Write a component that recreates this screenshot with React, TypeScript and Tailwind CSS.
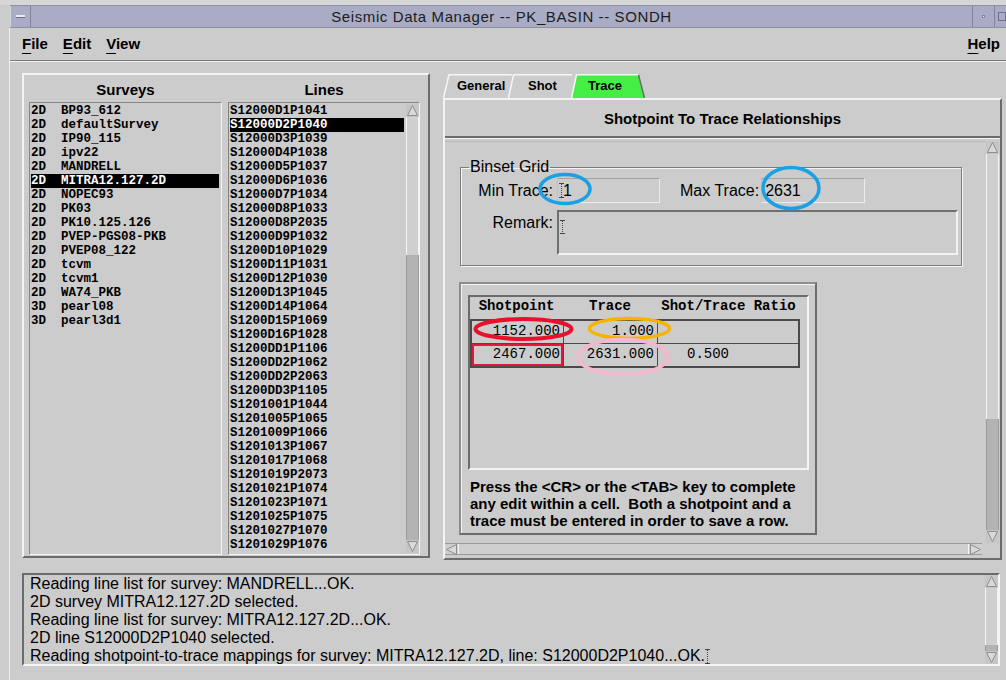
import React from "react";

const SURVEYS: [string, string][] = [
  ["2D", "BP93_612"],
  ["2D", "defaultSurvey"],
  ["2D", "IP90_115"],
  ["2D", "ipv22"],
  ["2D", "MANDRELL"],
  ["2D", "MITRA12.127.2D"],
  ["2D", "NOPEC93"],
  ["2D", "PK03"],
  ["2D", "PK10.125.126"],
  ["2D", "PVEP-PGS08-PKB"],
  ["2D", "PVEP08_122"],
  ["2D", "tcvm"],
  ["2D", "tcvm1"],
  ["2D", "WA74_PKB"],
  ["3D", "pearl08"],
  ["3D", "pearl3d1"],
];

const LINES = [
  "S12000D1P1041", "S12000D2P1040", "S12000D3P1039", "S12000D4P1038",
  "S12000D5P1037", "S12000D6P1036", "S12000D7P1034", "S12000D8P1033",
  "S12000D8P2035", "S12000D9P1032", "S1200D10P1029", "S1200D11P1031",
  "S1200D12P1030", "S1200D13P1045", "S1200D14P1064", "S1200D15P1069",
  "S1200D16P1028", "S1200DD1P1106", "S1200DD2P1062", "S1200DD2P2063",
  "S1200DD3P1105", "S1201001P1044", "S1201005P1065", "S1201009P1066",
  "S1201013P1067", "S1201017P1068", "S1201019P2073", "S1201021P1074",
  "S1201023P1071", "S1201025P1075", "S1201027P1070", "S1201029P1076",
];

const MESSAGES = [
  "Reading line list for survey: MANDRELL...OK.",
  "2D survey MITRA12.127.2D selected.",
  "Reading line list for survey: MITRA12.127.2D...OK.",
  "2D line S12000D2P1040 selected.",
  "Reading shotpoint-to-trace mappings for survey: MITRA12.127.2D, line: S12000D2P1040...OK.",
];

const mono = "font-['Liberation_Mono','DejaVu_Sans_Mono',monospace]";

// motif style arrow button for the scrollbars
const Arrow = ({ dir }: { dir: "up" | "down" | "left" | "right" }) => {
  const pts = {
    up: "6.5,1.5 11.5,11.5 1.5,11.5",
    down: "1.5,1.5 11.5,1.5 6.5,11.5",
    left: "1.5,6.5 11.5,1.5 11.5,11.5",
    right: "1.5,1.5 11.5,6.5 1.5,11.5",
  }[dir];
  return (
    <svg width="13" height="13" viewBox="0 0 13 13" className="block shrink-0">
      <polygon points={pts} fill="#d9d9d9" stroke="#8e8e8e" strokeWidth="1" />
    </svg>
  );
};

const VScroll = ({ light, className = "" }: { light: string; className?: string }) => (
  <div className={`flex w-[13px] shrink-0 flex-col bg-[#c6c6c6] ${className}`}>
    <Arrow dir="up" />
    <div className={`${light} border-x border-[#f4f4f4] bg-[#cfcfcf]`} />
    <div className="flex-1 border-x border-[#9c9c9c] bg-[#b3b3b3]" />
    <Arrow dir="down" />
  </div>
);

// text insertion cursor
const Caret = ({ h = 15 }: { h?: number }) => (
  <svg width="5" height={h} viewBox={`0 0 5 ${h}`} className="inline-block shrink-0 align-middle">
    <path d={`M0 0.5H5M0 ${h - 0.5}H5`} stroke="#444" strokeWidth="1" />
    <path d={`M2.5 1V${h - 1}`} stroke="#444" strokeWidth="1" strokeDasharray="1 1" />
  </svg>
);

const Tab = ({
  width,
  points,
  fill,
  label,
  pad,
  last,
  className = "",
}: {
  width: string;
  points: string;
  fill: string;
  label: string;
  pad: string;
  last?: boolean;
  className?: string;
}) => (
  <div className={`relative h-[24px] ${width} ${className}`}>
    <svg className="absolute inset-0" width="100%" height="24">
      <polygon points={points} fill={fill} />
      <polyline
        points={points.split(" ").slice(0, 3).join(" ")}
        fill="none"
        stroke="#f6f6f6"
        strokeWidth="1.5"
      />
      {last && (
        <polyline
          points={points.split(" ").slice(2).join(" ")}
          fill="none"
          stroke="#6a6a6a"
          strokeWidth="1.5"
        />
      )}
    </svg>
    <span className={`relative block text-[13px] font-bold leading-[24px] ${pad}`}>{label}</span>
  </div>
);

function TitleBar() {
  return (
    <>
      <div className="h-[5px] bg-[#d6d6d6]" />
      <div className="ml-[10px] flex h-[23px] border-y border-[#8c8fa6] bg-[#a9acc4]">
        <div className="flex w-[21px] items-center justify-center border-r border-[#80839a] border-l border-l-[#d0d2e0]">
          <span className="h-[3px] w-[9px] border-b border-[#6e7088] bg-[#e9eaf2]" />
        </div>
        <div className="flex-1 text-center text-[15px] leading-[21px] tracking-[0.6px] text-[#1c1c1c]">
          Seismic Data Manager -- PK_BASIN -- SONDH
        </div>
        <div className="flex w-[22px] items-center justify-center border-l border-[#80839a]">
          <span className="h-[3px] w-[3px] border border-[#80839a] bg-[#e8e8ee]" />
        </div>
        <div className="flex w-[12px] items-center border-l border-[#80839a] pl-[3px]">
          <span className="h-[9px] w-[9px] border border-[#6e7088]" />
        </div>
      </div>
    </>
  );
}

function MenuBar() {
  const item = (first: string, rest: string) => (
    <span className="text-[15px] font-bold">
      <span className="underline underline-offset-[4px]">{first}</span>
      {rest}
    </span>
  );
  return (
    <>
      <div className="flex h-[33px] items-center justify-between border-b border-[#777] pl-[12px] pr-[6px]">
        <div className="flex gap-[15px]">
          {item("F", "ile")}
          {item("E", "dit")}
          {item("V", "iew")}
        </div>
        {item("H", "elp")}
      </div>
      <div className="h-px bg-[#f2f2f2]" />
    </>
  );
}

function SurveyPanel() {
  return (
    <div className="ml-[12px] h-[485px] w-[408px] shrink-0 border-2 border-t-[#f4f4f4] border-l-[#f4f4f4] border-b-[#6b6b6b] border-r-[#6b6b6b]">
      <div className="flex h-[27px] pl-[5px] pt-[3px] text-[15px] font-bold leading-[24px]">
        <div className="w-[193px] text-center">Surveys</div>
        <div className="ml-[6px] w-[192px] text-center">Lines</div>
      </div>
      <div className={`flex gap-[6px] pl-[5px] text-[12.5px] font-bold leading-[14px] ${mono}`}>
        <div className="h-[453px] w-[193px] border border-t-[#858585] border-l-[#858585] border-b-[#f5f5f5] border-r-[#f5f5f5] pt-px">
          {SURVEYS.map(([dim, name]) => {
            const sel = name === "MITRA12.127.2D";
            return (
              <div
                key={name}
                className={`ml-px mr-[2px] h-[14px] whitespace-pre ${sel ? "bg-black text-white" : ""}`}
              >
                {`${dim}  ${name}`}
              </div>
            );
          })}
        </div>
        <div className="flex h-[453px] w-[192px] border border-t-[#858585] border-l-[#858585] border-b-[#f5f5f5] border-r-[#f5f5f5]">
          <div className="flex-1 pt-px">
            {LINES.map((l) => {
              const sel = l === "S12000D2P1040";
              return (
                <div key={l} className={`ml-px mr-[2px] h-[14px] ${sel ? "bg-black text-white" : ""}`}>
                  {l}
                </div>
              );
            })}
          </div>
          <VScroll light="h-[138px]" className="my-px" />
        </div>
      </div>
    </div>
  );
}

function BinsetGrid() {
  const field =
    "h-[25px] border border-t-[#a2a2a2] border-l-[#c2c2c2] border-b-[#ececec] border-r-[#ececec] flex items-center pl-px";
  return (
    <fieldset className="ml-[15px] mt-[15px] w-[502px] border border-[#7c7c7c] pb-[10px] shadow-[inset_1px_1px_0_#f4f4f4,1px_1px_0_#f4f4f4]">
      <legend className="ml-[8px] px-px text-[16px] leading-[18px]">Binset Grid</legend>
      <div className="mt-[2px] flex items-center text-[16px]">
        <span className="w-[92px] text-right">Min Trace:</span>
        <div className={`ml-[4px] w-[103px] ${field}`}>
          <Caret />
          <span className="-ml-[1px]">1</span>
        </div>
        <span className="ml-[20px]">Max Trace:</span>
        <div className={`ml-[2px] w-[104px] ${field}`}>
          <span className="pl-[2px]">2631</span>
        </div>
      </div>
      <div className="mt-[7px] flex items-start text-[16px]">
        <span className="mt-[4px] w-[92px] text-right leading-[18px]">Remark:</span>
        <div className="ml-[4px] h-[45px] w-[401px] border-2 border-t-[#6f6f6f] border-l-[#6f6f6f] border-b-[#f2f2f2] border-r-[#f2f2f2] pl-[1px] pt-[2px]">
          <Caret h={14} />
        </div>
      </div>
    </fieldset>
  );
}

function TraceTable() {
  const cell = "h-[22px] leading-[21px] border-[#4a4a4a]";
  return (
    <div className="ml-[14px] mt-[16px] h-[253px] w-[358px] border-2 border-t-[#8c8c8c] border-l-[#8c8c8c] border-b-[#6b6b6b] border-r-[#6b6b6b] pl-[7px] pt-[11px] shadow-[inset_1px_1px_0_#f4f4f4]">
      <div className="h-[175px] w-[341px] border-2 border-t-[#6b6b6b] border-l-[#6b6b6b] border-b-[#f4f4f4] border-r-[#f4f4f4]">
        <div className={`grid h-[18px] grid-cols-[93px_94px_143px] text-center text-[14px] font-bold leading-[19px] ${mono}`}>
          <span>Shotpoint</span>
          <span>Trace</span>
          <span>Shot/Trace Ratio</span>
        </div>
        <div className={`mt-[4px] w-[330px] border-2 border-[#4a4a4a] text-[14px] ${mono}`}>
          <div className="grid grid-cols-[91px_94px_141px]">
            <span className={`${cell} pr-[3px] text-right`}>1152.000</span>
            <span className={`${cell} border-l pr-[3px] text-right`}>1.000</span>
            <span className={`${cell} border-l`} />
          </div>
          <div className="grid grid-cols-[91px_94px_141px] border-t border-[#4a4a4a]">
            <span className={`${cell} pr-[3px] text-right shadow-[inset_0_0_0_2px_#e3173e]`}>2467.000</span>
            <span className={`${cell} border-l pr-[3px] text-right`}>2631.000</span>
            <span className={`${cell} border-l pl-[29px]`}>0.500</span>
          </div>
        </div>
      </div>
      <p className="mt-[8px] pl-[2px] text-[15px] font-bold leading-[17px]">
        Press the &lt;CR&gt; or the &lt;TAB&gt; key to complete
        <br />
        any edit within a cell.&nbsp; Both a shotpoint and a
        <br />
        trace must be entered in order to save a row.
      </p>
    </div>
  );
}

function TracePanel() {
  return (
    <div className="ml-[13px] mt-px w-[559px] shrink-0">
      <div className="flex h-[24px]">
        <Tab width="w-[69px]" points="0.5,24 6,0.75 69,0.75 69,24" fill="#cccccc" label="General" pad="pl-[14px]" />
        <Tab
          width="w-[64px]"
          className="-ml-[4px]"
          points="0.5,24 5.5,0.75 64,0.75 64,24"
          fill="#cccccc"
          label="Shot"
          pad="pl-[20px]"
        />
        <Tab
          width="w-[74px]"
          className="-ml-[1px]"
          points="0.5,24 5.5,0.75 67.5,0.75 73.5,24"
          fill="#44ee44"
          label="Trace"
          pad="pl-[17px]"
          last
        />
      </div>
      <div className="h-[462px] border-2 border-t-[#f4f4f4] border-l-[#f4f4f4] border-b-[#6b6b6b] border-r-[#6b6b6b]">
        <div className="h-[38px] border-b-2 border-[#6b6b6b] text-center text-[15px] font-bold leading-[37px]">
          Shotpoint To Trace Relationships
        </div>
        <div className="h-px bg-[#f4f4f4]" />
        <div className="flex h-[419px] pt-[2px]">
          <div className="flex w-[540px] flex-col">
            <div className="h-[402px] overflow-hidden border-t border-[#b9b9b9] pt-px">
              <BinsetGrid />
              <TraceTable />
            </div>
            <div className="flex h-[12px] w-[537px] items-center border-y border-[#9c9c9c] bg-[#cfcfcf]">
              <Arrow dir="left" />
              <div className="h-full flex-1 border-x border-[#f4f4f4]" />
              <Arrow dir="right" />
            </div>
          </div>
          <VScroll light="h-[265px]" className="ml-px h-[402px]" />
        </div>
      </div>
    </div>
  );
}

function MessageLog() {
  return (
    <div className="ml-[12px] mt-[13px] flex h-[93px] w-[978px] border-2 border-t-[#6b6b6b] border-l-[#6b6b6b] border-b-[#f4f4f4] border-r-[#f4f4f4]">
      <div className="flex-1 pl-[6px] text-[16px] leading-[18px]">
        {MESSAGES.map((m, i) => (
          <div key={i} className="flex items-center whitespace-pre">
            {m}
            {i === MESSAGES.length - 1 && <Caret h={15} />}
          </div>
        ))}
      </div>
      <VScroll light="h-[57px]" />
    </div>
  );
}

export default function App() {
  return (
    <div className="relative h-[680px] w-[1006px] overflow-hidden bg-[#cccccc] font-['Liberation_Sans',Arial,sans-serif] text-black">
      <TitleBar />
      <div className="ml-[9px] h-[652px] border-l border-[#efefef]">
        <MenuBar />
        <div className="mt-[11px] flex items-start">
          <SurveyPanel />
          <TracePanel />
        </div>
        <MessageLog />
      </div>

      {/* hand-drawn markers around the edited values */}
      <svg className="pointer-events-none absolute inset-0" width="1006" height="680" viewBox="0 0 1006 680">
        <g fill="none" strokeWidth="3.5">
          <ellipse cx="565" cy="189" rx="25" ry="14.5" stroke="#1aa0e4" />
          <ellipse cx="791" cy="188" rx="28" ry="20.5" stroke="#1aa0e4" />
          <ellipse cx="523.5" cy="329" rx="48" ry="10" stroke="#e8102a" strokeWidth="4" />
          <ellipse cx="629.5" cy="328.5" rx="40" ry="10" stroke="#f6b400" />
          <ellipse cx="623" cy="357" rx="45" ry="17.5" stroke="#f7b6cf" />
        </g>
      </svg>
    </div>
  );
}
